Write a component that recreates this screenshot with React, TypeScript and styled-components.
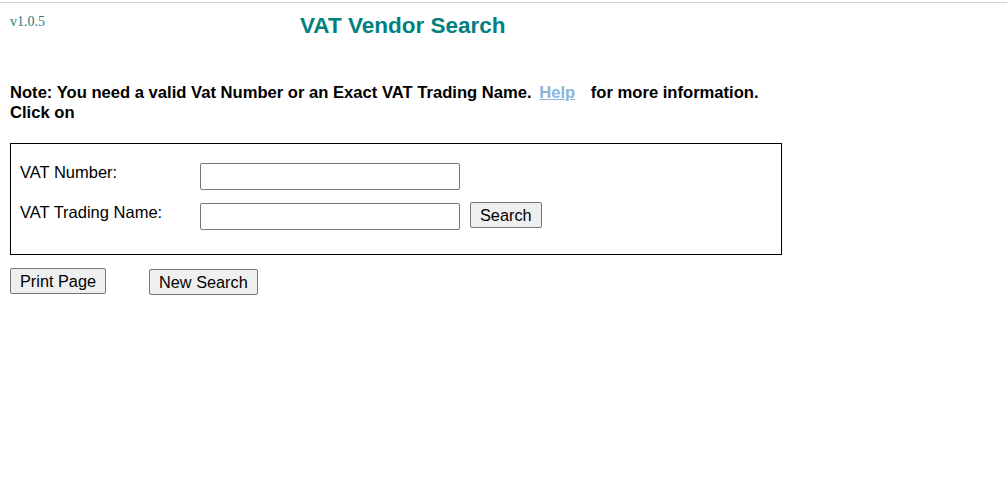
import React from "react";
import styled, { createGlobalStyle } from "styled-components";

const GlobalStyle = createGlobalStyle`
  html, body {
    margin: 0;
    padding: 0;
    background: #ffffff;
  }
  body {
    font-family: "Liberation Sans", Arial, sans-serif;
    color: #000000;
  }
`;

const Page = styled.div`
  margin-top: 2px;
  border-top: 1px solid #d4d4d4;
  padding: 0 10px;
  min-height: 480px;
  box-sizing: border-box;
`;

const Header = styled.header`
  display: flex;
  align-items: flex-start;
  padding-top: 7px;
`;

const Version = styled.span`
  width: 290px;
  margin-top: 4px;
  font-family: "Liberation Serif", "Times New Roman", serif;
  font-size: 14px;
  line-height: 16px;
  color: #23808a;
`;

const Title = styled.h1`
  margin: 3px 0 0;
  font-family: "Liberation Sans", Arial, sans-serif;
  font-size: 22.5px;
  line-height: 25px;
  font-weight: bold;
  color: #008080;
`;

const Note = styled.p`
  width: 772px;
  margin: 45px 0 0;
  font-size: 16.6px;
  line-height: 20px;
  font-weight: bold;
`;

const HelpLink = styled.a`
  color: #8ab5dc;
  text-decoration: underline;
  margin-left: 3px;
  margin-right: 11px;
  cursor: pointer;
`;

const SearchBox = styled.form`
  width: 772px;
  box-sizing: border-box;
  margin-top: 20px;
  border: 1px solid #000000;
  padding: 19px 9px 24px;
  display: flex;
  flex-direction: column;
  gap: 13px;
`;

const FieldRow = styled.div`
  display: flex;
  align-items: flex-start;
  gap: 10px;
`;

const Label = styled.label`
  width: 180px;
  margin-right: -10px;
  font-size: 16.5px;
  line-height: 19px;
`;

const TextInput = styled.input`
  width: 260px;
  height: 27px;
  box-sizing: border-box;
  border: 1px solid #767676;
  border-radius: 2px;
  padding: 1px 4px;
  font-family: "Liberation Sans", Arial, sans-serif;
  font-size: 16px;
  background: #ffffff;
`;

const Button = styled.button<{ $shift?: number }>`
  height: 26px;
  box-sizing: border-box;
  padding: 3px 9px;
  margin-top: ${(p) => p.$shift ?? 0}px;
  border: 1px solid #767676;
  border-radius: 2px;
  background: #efefef;
  color: #000000;
  font-family: "Liberation Sans", Arial, sans-serif;
  font-size: 16.3px;
  line-height: 18px;
  cursor: pointer;
`;

const Actions = styled.div`
  display: flex;
  align-items: flex-start;
  gap: 43px;
  margin-top: 14px;
`;

export default function App() {
  return (
    <>
      <GlobalStyle />
      <Page>
        <Header>
          <Version>v1.0.5</Version>
          <Title>VAT Vendor Search</Title>
        </Header>
        <Note>
          Note: You need a valid Vat Number or an Exact VAT Trading Name.{" "}
          <HelpLink href="#">Help</HelpLink> for more information.
          <br />
          Click on
        </Note>
        <SearchBox onSubmit={(e) => e.preventDefault()}>
          <FieldRow>
            <Label htmlFor="vatNumber">VAT Number:</Label>
            <TextInput id="vatNumber" type="text" />
          </FieldRow>
          <FieldRow>
            <Label htmlFor="vatName">VAT Trading Name:</Label>
            <TextInput id="vatName" type="text" />
            <Button type="submit" $shift={-1}>Search</Button>
          </FieldRow>
        </SearchBox>
        <Actions>
          <Button type="button" $shift={-1}>Print Page</Button>
          <Button type="button">New Search</Button>
        </Actions>
      </Page>
    </>
  );
}
